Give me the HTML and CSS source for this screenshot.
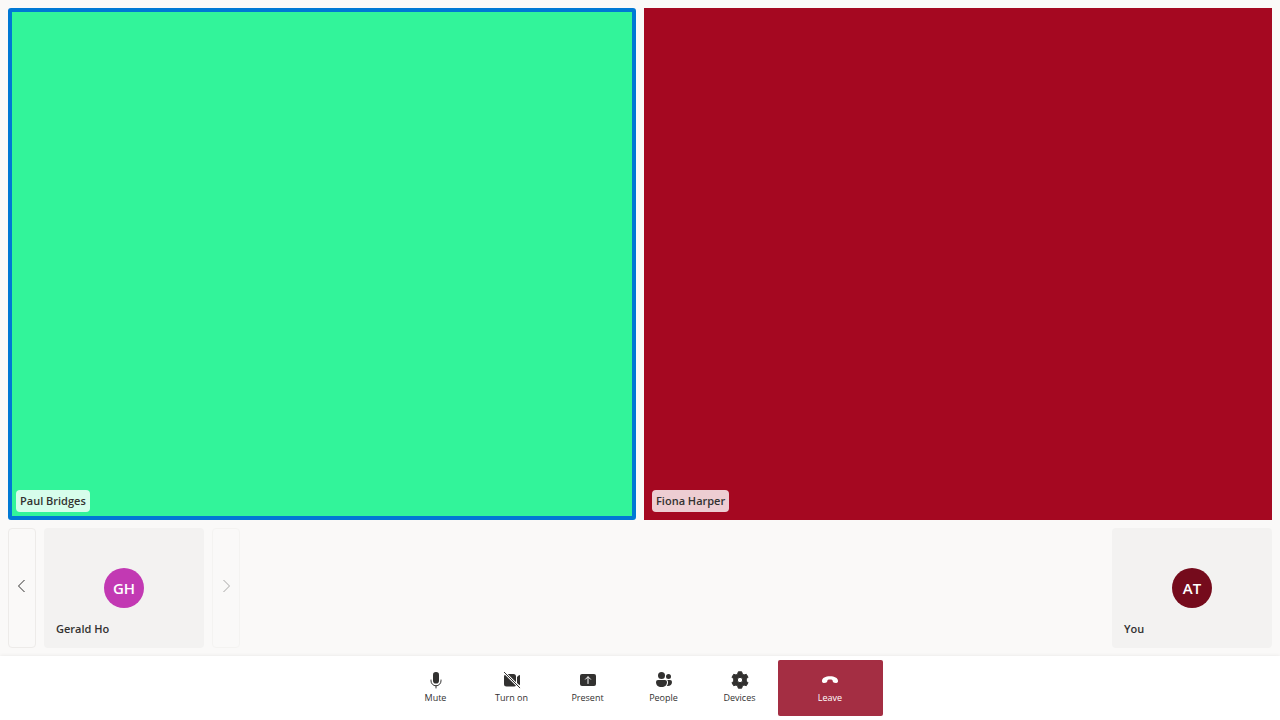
FILE: index.html
```html
<!DOCTYPE html>
<html lang="en">
<head>
<meta charset="utf-8">
<title>Call</title>
<link rel="stylesheet" href="styles.css">
</head>
<body>
<main class="stage">
  <section class="grid">
    <article class="video video-green speaking"><span class="name">Paul Bridges</span></article>
    <article class="video video-red"><span class="name">Fiona Harper</span></article>
  </section>
  <section class="strip">
    <button class="pager" aria-label="Previous page">
      <svg width="12" height="16" viewBox="0 0 12 16"><path d="M8.500 0 2.500 6l6 6"/></svg>
    </button>
    <article class="tile">
      <span class="avatar avatar-pink">GH</span>
      <span class="tile-name">Gerald Ho</span>
    </article>
    <button class="pager" aria-label="Next page" disabled>
      <svg width="12" height="16" viewBox="0 0 12 16"><path d="M3.500 0l6 6-6 6"/></svg>
    </button>
    <article class="tile local">
      <span class="avatar avatar-wine">AT</span>
      <span class="tile-name">You</span>
    </article>
  </section>
</main>
<footer class="controls">
  <button class="control">
    <svg class="icon" viewBox="0 0 20 20"><rect x="7" y="2" width="6" height="11.500" rx="2.800"/><path class="line" d="M5 10v.8a5 5 0 0 0 10 0V10M10 15.800V18"/></svg>
    <span>Mute</span>
  </button>
  <button class="control">
    <svg class="icon" viewBox="0 0 20 20"><path d="M2.900 4.700 14 15.800A2.500 2.500 0 0 1 11.500 16.500h-7A2.500 2.500 0 0 1 2 14V6.500A2.500 2.500 0 0 1 2.900 4.700ZM5.700 4h5.800A2.500 2.500 0 0 1 14 6.500V12.300ZM15 6.900l1.900-1.600c.5-.4 1.100-.1 1.100.5v8.400c0 .5-.2.900-.5 1.100L15 12.900Z"/><path class="line" d="m2.300 2.300 15.500 15.500"/></svg>
    <span>Turn on</span>
  </button>
  <button class="control">
    <svg class="icon" viewBox="0 0 20 20"><rect x="2" y="4" width="16" height="12" rx="2"/><path class="cut" d="M10 13.500V7M7.500 9.200 10 6.700l2.500 2.500"/></svg>
    <span>Present</span>
  </button>
  <button class="control">
    <svg class="icon" viewBox="0 0 20 20"><circle cx="7.500" cy="5.500" r="3.500"/><circle cx="14.500" cy="6.500" r="2.500"/><path d="M4 10h7a2 2 0 0 1 2 2c0 3-2 5-5.500 5S2 15 2 12a2 2 0 0 1 2-2ZM13.200 10H16a2 2 0 0 1 2 2c0 2.700-1.700 4-4.300 4l-.9-.1C14.300 14.500 14.500 11.500 13.200 10Z"/></svg>
    <span>People</span>
  </button>
  <button class="control">
    <svg class="icon" viewBox="0 0 20 20"><path class="gear" fill-rule="evenodd" d="M8.300 1.800h3.400l.6 2.200 1.700 1 2.300-.7L18 7.200l-1.700 1.700v2.200l1.700 1.700-1.700 2.900-2.300-.7-1.700 1-.6 2.200H8.300l-.6-2.200-1.700-1-2.300.7L2 12.800l1.700-1.700V8.900L2 7.200l1.700-2.900 2.300.7 1.700-1ZM10 7.300a2.700 2.700 0 1 0 0 5.400 2.700 2.700 0 0 0 0-5.400Z"/></svg>
    <span>Devices</span>
  </button>
  <button class="control leave">
    <svg class="icon" viewBox="0 0 20 20"><path d="M18 10.900v.7c-.1 1-1 1.600-2 1.400l-1.800-.3c-.8-.2-1.300-.7-1.500-1.500l-.3-1.300c-1.500-.6-3.300-.6-4.800 0l-.3 1.300c-.2.800-.7 1.300-1.500 1.500L4 13c-1 .2-1.900-.4-2-1.400v-.7C2 8 5.700 6.300 10 6.300s8 1.700 8 4.600Z"/></svg>
    <span>Leave</span>
  </button>
</footer>
</body>
</html>
```
FILE: styles.css
```css
* {
  box-sizing: border-box;
}

body {
  margin: 0;
  min-height: 100vh;
  display: flex;
  flex-direction: column;
  background: #faf9f8;
  color: #323130;
  font-family: "Open Sans", "Noto Sans", sans-serif;
}

button {
  font-family: inherit;
  color: inherit;
  padding: 0;
}

.stage {
  flex: 1;
  display: flex;
  flex-direction: column;
  gap: 8px;
  padding: 8px;
}

.grid {
  flex: 1;
  display: grid;
  grid-template-columns: 1fr 1fr;
  gap: 8px;
}

.video {
  display: flex;
  align-items: flex-end;
  padding: 8px;
}

.video-green {
  background: #32f49a;
}

.video-red {
  background: #a50821;
}

.speaking {
  padding: 4px;
  border: 4px solid #0078d4;
  border-radius: 3px;
}

.name {
  padding: 2px 4px;
  border-radius: 4px;
  background: rgba(255, 255, 255, 0.8);
  font-size: 11px;
  font-weight: 600;
  line-height: 18px;
}

.strip {
  display: flex;
  gap: 8px;
  height: 120px;
}

.pager {
  width: 28px;
  border: 1px solid #edebe9;
  border-radius: 4px;
  background: transparent;
}

.pager svg {
  display: block;
  margin: 0 auto;
  fill: none;
  stroke: currentColor;
}

.pager:disabled {
  opacity: 0.4;
}

.tile {
  width: 160px;
  display: grid;
  grid-template-rows: 40px 40px 40px;
  justify-items: center;
  border-radius: 4px;
  background: #f3f2f1;
}

.local {
  margin-left: auto;
}

.avatar {
  grid-row: 2;
  width: 40px;
  border-radius: 50%;
  color: #fff;
  font-size: 15px;
  font-weight: 600;
  line-height: 40px;
  text-align: center;
}

.avatar-pink {
  background: #c239b3;
}

.avatar-wine {
  background: #750b1c;
}

.tile-name {
  grid-row: 3;
  justify-self: start;
  padding: 12px;
  font-size: 11px;
  font-weight: 600;
  line-height: 18px;
}

.controls {
  display: flex;
  justify-content: center;
  padding: 4px;
  background: #fff;
  box-shadow: 0 0 4px rgba(0, 0, 0, 0.08);
}

.control {
  width: 76px;
  height: 56px;
  display: flex;
  flex-direction: column;
  align-items: center;
  justify-content: center;
  border: 0;
  border-radius: 2px;
  background: transparent;
  font-size: 9px;
  line-height: 16px;
}

.icon {
  width: 20px;
  height: 20px;
  fill: currentColor;
}

.icon .gear {
  stroke: currentColor;
  stroke-linejoin: round;
}

.icon .line,
.icon .cut {
  fill: none;
  stroke: currentColor;
  stroke-linecap: round;
}

.icon .cut {
  stroke: #fff;
}

.leave {
  width: 105px;
  background: #a42e43;
  color: #fff;
}
```
